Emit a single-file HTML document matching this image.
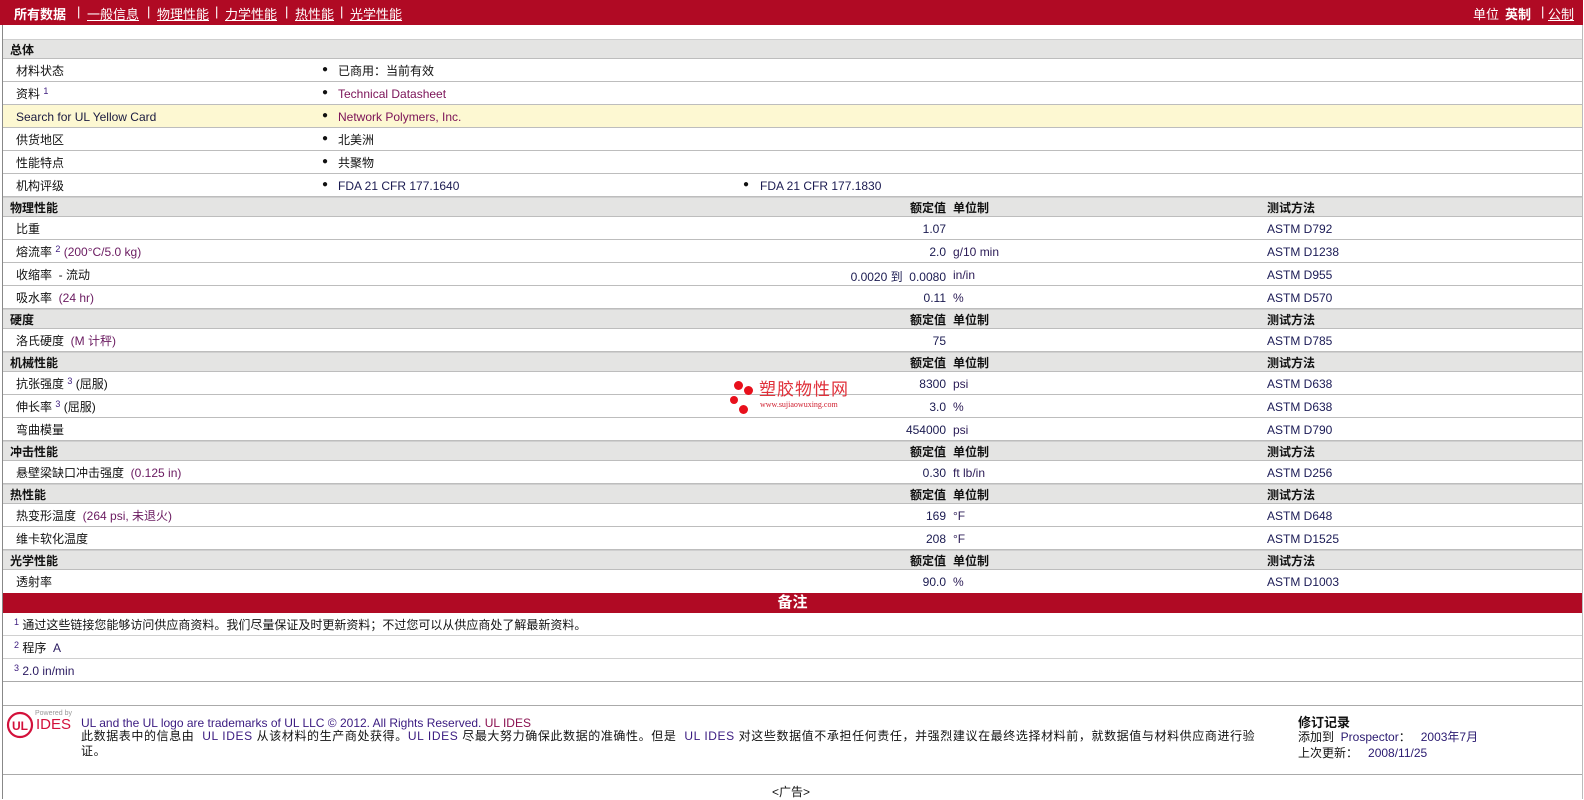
<!DOCTYPE html>
<html><head><meta charset="utf-8">
<style>
*{margin:0;padding:0;box-sizing:border-box}
body{width:1584px;height:799px;background:#fff;position:relative;overflow:hidden;font-family:"Liberation Sans","Noto Sans CJK SC",sans-serif;font-size:12px;color:#111}
.frame{position:absolute;left:2px;top:24px;width:1581px;height:775px;border-left:1px solid #888;border-right:1px solid #bbb}
.top{position:absolute;left:0;top:0;width:1583px;height:25px;background:#b00a24;color:#fff;font-size:13px}
.top span{position:absolute;top:4px}
.top u{text-decoration:underline}
.r{position:absolute;left:3px;width:1579px;border-bottom:1px solid #bdbdbd}
.h{background:#e4e4e3;height:20px;border-top:1px solid #cfcfcf;font-weight:bold}
.d{height:23px}
.r span{position:absolute;white-space:nowrap}
.h span{top:1px}
.d span{top:3px}
.d span.lat{top:5px}
.l{left:13px}
.hl{left:7px}
.b{left:319px;font-size:10px;top:5px!important}
.v{left:335px}
.b2{left:740px;font-size:10px;top:5px!important}
.v2{left:757px}
.val{right:636px;text-align:right;color:#1a1a50}
.un{left:950px;color:#2a1a55}
.hv{right:636px}
.hu{left:950px}
.tm{left:1264px;color:#1a1a55}
.d span.val,.d span.un,.d span.tm{top:5px}
.ln{color:#7b1257}
.cv{color:#6a1a60}
sup{font-size:9px;color:#402080;vertical-align:4px;line-height:0}
.red{position:absolute;left:3px;width:1579px;top:593px;height:20px;background:#b00a24;color:#fff;font-weight:bold;font-size:15px;text-align:center;line-height:20px}
.n{position:absolute;left:3px;width:1579px;height:23px;border-bottom:1px solid #d0d0d0}
.n span{position:absolute;left:11px;top:3px}
.n span.lat{top:5px}
.r span span,.n span span{position:static}
</style></head><body>
<div class="frame"></div>
<div class="top">
<span style="left:14px;font-weight:bold">所有数据</span>
<span style="left:77px">|</span><span style="left:87px"><u>一般信息</u></span>
<span style="left:147px">|</span><span style="left:157px"><u>物理性能</u></span>
<span style="left:215px">|</span><span style="left:225px"><u>力学性能</u></span>
<span style="left:285px">|</span><span style="left:295px"><u>热性能</u></span>
<span style="left:340px">|</span><span style="left:350px"><u>光学性能</u></span>
<span style="left:1473px">单位</span><span style="left:1505px;font-weight:bold">英制</span>
<span style="left:1541px">|</span><span style="left:1548px"><u>公制</u></span>
</div>

<div class="r h" style="top:39px"><span class="hl">总体</span></div>
<div class="r d" style="top:59px"><span class="l">材料状态</span><span class="b">●</span><span class="v">已商用：当前有效</span></div>
<div class="r d" style="top:82px"><span class="l">资料 <sup>1</sup></span><span class="b">●</span><span class="v ln lat">Technical Datasheet</span></div>
<div class="r d" style="top:105px;background:#fdf8d2"><span class="l lat" style="color:#1a1a40">Search for UL Yellow Card</span><span class="b">●</span><span class="v ln lat">Network Polymers, Inc.</span></div>
<div class="r d" style="top:128px"><span class="l">供货地区</span><span class="b">●</span><span class="v">北美洲</span></div>
<div class="r d" style="top:151px"><span class="l">性能特点</span><span class="b">●</span><span class="v">共聚物</span></div>
<div class="r d" style="top:174px"><span class="l">机构评级</span><span class="b">●</span><span class="v lat" style="color:#1a1a50">FDA 21 CFR 177.1640</span><span class="b2">●</span><span class="v2 lat" style="color:#1a1a50">FDA 21 CFR 177.1830</span></div>

<div class="r h" style="top:197px"><span class="hl">物理性能</span><span class="hv">额定值</span><span class="hu">单位制</span><span class="tm" style="color:#111">测试方法</span></div>
<div class="r d" style="top:217px"><span class="l">比重</span><span class="val">1.07</span><span class="tm">ASTM D792</span></div>
<div class="r d" style="top:240px"><span class="l">熔流率 <sup>2</sup> <span class="cv">(200°C/5.0 kg)</span></span><span class="val">2.0</span><span class="un">g/10 min</span><span class="tm">ASTM D1238</span></div>
<div class="r d" style="top:263px"><span class="l">收缩率 &nbsp;- 流动</span><span class="val">0.0020 到 &nbsp;0.0080</span><span class="un">in/in</span><span class="tm">ASTM D955</span></div>
<div class="r d" style="top:286px"><span class="l">吸水率 &nbsp;<span class="cv">(24 hr)</span></span><span class="val">0.11</span><span class="un">%</span><span class="tm">ASTM D570</span></div>

<div class="r h" style="top:309px"><span class="hl">硬度</span><span class="hv">额定值</span><span class="hu">单位制</span><span class="tm" style="color:#111">测试方法</span></div>
<div class="r d" style="top:329px"><span class="l">洛氏硬度 &nbsp;<span class="cv">(M 计秤)</span></span><span class="val">75</span><span class="tm">ASTM D785</span></div>

<div class="r h" style="top:352px"><span class="hl">机械性能</span><span class="hv">额定值</span><span class="hu">单位制</span><span class="tm" style="color:#111">测试方法</span></div>
<div class="r d" style="top:372px"><span class="l">抗张强度 <sup>3</sup> (屈服)</span><span class="val">8300</span><span class="un">psi</span><span class="tm">ASTM D638</span></div>
<div class="r d" style="top:395px"><span class="l">伸长率 <sup>3</sup> (屈服)</span><span class="val">3.0</span><span class="un">%</span><span class="tm">ASTM D638</span></div>
<div class="r d" style="top:418px"><span class="l">弯曲模量</span><span class="val">454000</span><span class="un">psi</span><span class="tm">ASTM D790</span></div>

<div class="r h" style="top:441px"><span class="hl">冲击性能</span><span class="hv">额定值</span><span class="hu">单位制</span><span class="tm" style="color:#111">测试方法</span></div>
<div class="r d" style="top:461px"><span class="l">悬壁梁缺口冲击强度 &nbsp;<span class="cv">(0.125 in)</span></span><span class="val">0.30</span><span class="un">ft lb/in</span><span class="tm">ASTM D256</span></div>

<div class="r h" style="top:484px"><span class="hl">热性能</span><span class="hv">额定值</span><span class="hu">单位制</span><span class="tm" style="color:#111">测试方法</span></div>
<div class="r d" style="top:504px"><span class="l">热变形温度 &nbsp;<span class="cv">(264 psi, 未退火)</span></span><span class="val">169</span><span class="un">°F</span><span class="tm">ASTM D648</span></div>
<div class="r d" style="top:527px"><span class="l">维卡软化温度</span><span class="val">208</span><span class="un">°F</span><span class="tm">ASTM D1525</span></div>

<div class="r h" style="top:550px"><span class="hl">光学性能</span><span class="hv">额定值</span><span class="hu">单位制</span><span class="tm" style="color:#111">测试方法</span></div>
<div class="r d" style="top:570px;border-bottom:none"><span class="l">透射率</span><span class="val">90.0</span><span class="un">%</span><span class="tm">ASTM D1003</span></div>

<div class="red">备注</div>
<div class="n" style="top:613px"><span><sup>1</sup> 通过这些链接您能够访问供应商资料。我们尽量保证及时更新资料；不过您可以从供应商处了解最新资料。</span></div>
<div class="n" style="top:636px"><span><sup>2</sup> 程序 &nbsp;<span style="color:#2a1a60">A</span></span></div>
<div class="n" style="top:659px;border-bottom:1px solid #aaa"><span class="lat"><sup>3</sup> <span style="color:#2a1a60">2.0 in/min</span></span></div>
<div style="position:absolute;left:3px;width:1579px;top:705px;border-top:1px solid #aaa"></div>
<div style="position:absolute;left:3px;width:1579px;top:774px;border-top:1px solid #aaa"></div>

<!-- watermark -->
<div style="position:absolute;left:734px;top:381px;width:9px;height:9px;border-radius:50%;background:#e8101c"></div>
<div style="position:absolute;left:744px;top:386px;width:9px;height:9px;border-radius:50%;background:#e8101c"></div>
<div style="position:absolute;left:730px;top:396px;width:8px;height:8px;border-radius:50%;background:#e8101c"></div>
<div style="position:absolute;left:739px;top:405px;width:9px;height:9px;border-radius:50%;background:#e8101c"></div>
<div style="position:absolute;left:759px;top:379px;font-size:17px;color:#e0303a;line-height:18px;font-family:'Noto Sans CJK SC',sans-serif;letter-spacing:1px">塑胶物性网</div>
<div style="position:absolute;left:760px;top:400px;font-size:8px;color:#d02030;font-family:'Liberation Serif',serif">www.sujiaowuxing.com</div>

<!-- footer -->
<svg style="position:absolute;left:6px;top:711px" width="28" height="28" viewBox="0 0 28 28"><circle cx="14" cy="14" r="12" fill="none" stroke="#d3103a" stroke-width="2.2"/><text x="14" y="19" font-size="12" font-weight="bold" text-anchor="middle" fill="#d3103a" font-family="Liberation Sans">UL</text></svg>
<div style="position:absolute;left:35px;top:710px;font-size:7px;color:#999">Powered by</div>
<div style="position:absolute;left:36px;top:717px;font-size:15px;color:#d3103a;line-height:16px">IDES</div>
<div style="position:absolute;left:81px;top:716px;color:#3a1a80">UL and the UL logo are trademarks of UL LLC © 2012. All Rights Reserved. <span style="color:#8a1050">UL IDES</span></div>
<div style="position:absolute;left:81px;top:729px;width:1185px;line-height:15px;letter-spacing:0.6px">此数据表中的信息由 &nbsp;<span style="color:#3a1a80">UL IDES</span> 从该材料的生产商处获得。<span style="color:#3a1a80">UL IDES</span> 尽最大努力确保此数据的准确性。但是 &nbsp;<span style="color:#3a1a80">UL IDES</span> 对这些数据值不承担任何责任，并强烈建议在最终选择材料前，就数据值与材料供应商进行验证。</div>
<div style="position:absolute;left:1298px;top:712px;font-weight:bold;font-size:13px">修订记录</div>
<div style="position:absolute;left:1298px;top:728px">添加到 &nbsp;<span style="color:#2a1a70">Prospector</span>： &nbsp;&nbsp;<span style="color:#2a1a70">2003年7月</span></div>
<div style="position:absolute;left:1298px;top:744px">上次更新： &nbsp;&nbsp;<span style="color:#2a1a70">2008/11/25</span></div>
<div style="position:absolute;left:772px;top:783px">&lt;广告&gt;</div>
</body></html>
